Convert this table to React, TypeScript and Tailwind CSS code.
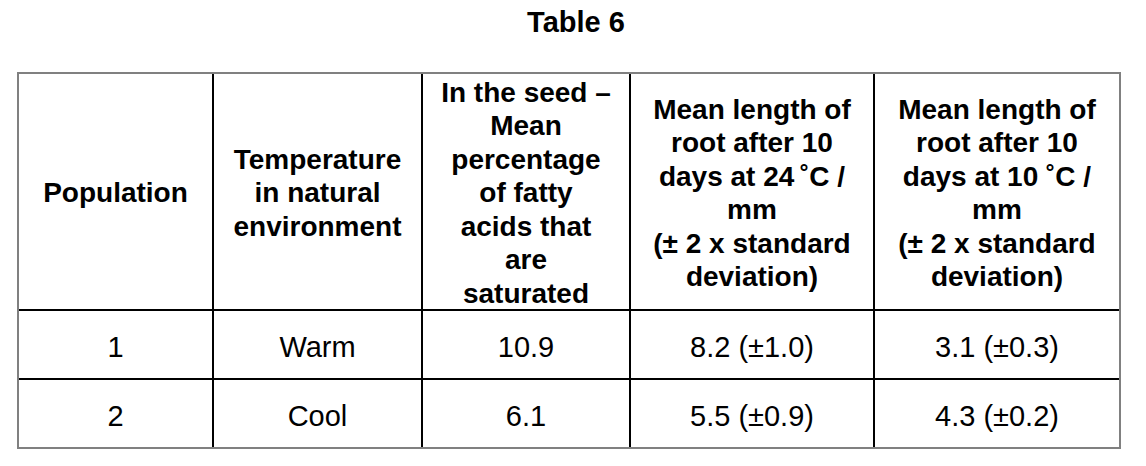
import React from "react";

const headers: string[][] = [
  ["Population"],
  ["Temperature", "in natural", "environment"],
  ["In the seed –", "Mean", "percentage", "of fatty", "acids that", "are", "saturated"],
  ["Mean length of", "root after 10", "days at 24\u2009˚C /", "mm", "(± 2 x standard", "deviation)"],
  ["Mean length of", "root after 10", "days at 10 ˚C /", "mm", "(± 2 x standard", "deviation)"],
];

const rows: string[][] = [
  ["1", "Warm", "10.9", "8.2 (±1.0)", "3.1 (±0.3)"],
  ["2", "Cool", "6.1", "5.5 (±0.9)", "4.3 (±0.2)"],
];

export default function App() {
  return (
    <main className="w-[1146px] h-[466px] bg-white text-black font-['Liberation_Sans',Arial,sans-serif]">
      <h1 className="pt-[5px] text-center text-[29px] leading-[34px] font-bold pl-[6px]">Table 6</h1>

      <div className="mt-[33px] ml-[17px] w-[1104px] border-2 border-[#808080] grid grid-cols-[195px_209px_208px_244px_244px] grid-rows-[237px_69px_67px]">
        {headers.map((lines, i) => (
          <div
            key={i}
            className={`flex flex-col items-center justify-center pt-[3px] border-b-2 border-black text-center text-[28px] leading-[33.5px] font-bold whitespace-nowrap ${
              i < 4 ? "border-r-2" : ""
            }`}
          >
            {lines.map((l, j) => (
              <span key={j}>{l}</span>
            ))}
          </div>
        ))}

        {rows.map((row, r) =>
          row.map((cell, c) => (
            <div
              key={`${r}-${c}`}
              className={`flex items-center justify-center pt-[4px] text-[29px] leading-[34px] border-black ${
                c < 4 ? "border-r-2" : ""
              } ${r === 0 ? "border-b-2" : ""}`}
            >
              {cell}
            </div>
          ))
        )}
      </div>
    </main>
  );
}
